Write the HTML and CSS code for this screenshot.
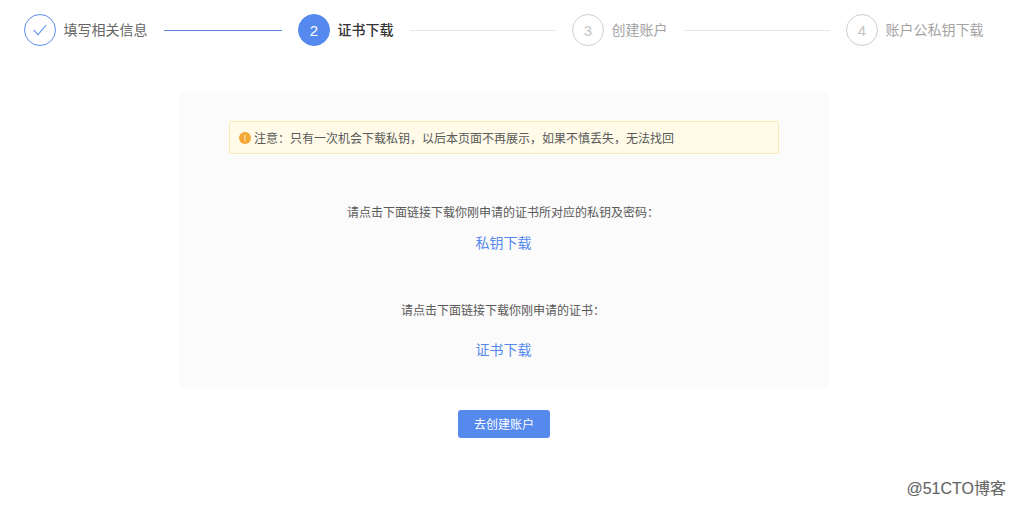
FILE: index.html
```html
<!DOCTYPE html>
<html lang="zh-CN">
<head>
  <meta charset="UTF-8" />
  <title>证书下载</title>
  <link rel="stylesheet" href="styles.css">
</head>
<body>
  <div class="steps">
    <div class="step step-done">
      <span class="step-icon">
        <svg width="14" height="12" viewBox="0 0 14 12" fill="none" stroke="#5b8def" stroke-width="1.1"><path d="M0.8 6.2 L5 10.6 L13.2 1"/></svg>
      </span>
      <span class="step-title">填写相关信息</span>
      <span class="step-line"></span>
    </div>
    <div class="step step-active">
      <span class="step-icon">2</span>
      <span class="step-title">证书下载</span>
      <span class="step-line"></span>
    </div>
    <div class="step">
      <span class="step-icon">3</span>
      <span class="step-title">创建账户</span>
      <span class="step-line"></span>
    </div>
    <div class="step step-last">
      <span class="step-icon">4</span>
      <span class="step-title">账户公私钥下载</span>
    </div>
  </div>

  <div class="card">
    <div class="alert">
      <span class="alert-icon">!</span>
      <span>注意：只有一次机会下载私钥，以后本页面不再展示，如果不慎丢失，无法找回</span>
    </div>
    <p class="hint hint-key">请点击下面链接下载你刚申请的证书所对应的私钥及密码：</p>
    <a class="link link-key" href="#">私钥下载</a>
    <p class="hint hint-cert">请点击下面链接下载你刚申请的证书：</p>
    <a class="link link-cert" href="#">证书下载</a>
  </div>

  <div class="actions">
    <button class="btn" type="button">去创建账户</button>
  </div>

  <div class="watermark">@51CTO博客</div>
</body>
</html>
```

FILE: styles.css
```css
html, body {
  height: 505px;
  overflow: hidden;
}

body {
  margin: 0;
  position: relative;
  background: #fff;
  color: #595959;
  font-family: "Liberation Sans", "Noto Sans CJK SC", sans-serif;
  font-size: 12px;
}

.steps {
  display: flex;
  padding: 14px 0 0 24px;
  height: 32px;
}

.step {
  display: flex;
  align-items: center;
  width: 274px;
  flex: none;
}

.step-last {
  width: auto;
}

.step-icon {
  box-sizing: border-box;
  width: 32px;
  height: 32px;
  flex: none;
  display: flex;
  align-items: center;
  justify-content: center;
  border: 1px solid #d0d0d0;
  border-radius: 50%;
  color: #c4c4c4;
  font-size: 15px;
}

.step-title {
  margin: 0 0 2px 7.5px;
  font-size: 14px;
  color: #a3a3a3;
  white-space: nowrap;
}

.step-line {
  flex: 1;
  height: 1px;
  margin: 0 16px 0 16.5px;
  background: #e8e8e8;
}

.step-done .step-icon {
  border-color: #5b8def;
}

.step-done .step-title {
  color: #666;
}

.step-done .step-line {
  background: #5b87dc;
}

.step-active .step-icon {
  border-color: #5589ee;
  background: #5589ee;
  color: #fff;
}

.step-active .step-title {
  color: #333;
  font-weight: 500;
}

.card {
  box-sizing: border-box;
  width: 650px;
  height: 298px;
  margin: 45px 0 0 179px;
  padding: 30px 50px 0;
  background: #fbfbfb;
  border-radius: 8px;
  text-align: center;
}

.alert {
  box-sizing: border-box;
  height: 33px;
  display: flex;
  align-items: center;
  padding: 0 9px;
  background: #fffbe8;
  border: 1px solid #fbe8b0;
  border-radius: 2px;
  color: #595959;
  text-align: left;
}

.alert-icon {
  width: 12px;
  height: 12px;
  margin-right: 3px;
  flex: none;
  border-radius: 50%;
  background: #f5a833;
  color: #fff;
  font-size: 9px;
  line-height: 12px;
  text-align: center;
}

.hint {
  margin: 0 2px 0 0;
  line-height: 18px;
  color: #595959;
}

.hint-key {
  margin-top: 50px;
}

.hint-cert {
  margin-top: 49px;
}

.link {
  display: block;
  margin-right: 1px;
  font-size: 14px;
  line-height: 20px;
  color: #5589ee;
  text-decoration: none;
}

.link-key {
  margin-top: 11px;
}

.link-cert {
  margin-top: 20px;
}

.actions {
  margin-top: 21px;
  text-align: center;
  width: 1008px;
}

.btn {
  width: 92px;
  height: 28px;
  padding: 0 0 2px;
  border: none;
  border-radius: 3px;
  background: #5589ee;
  color: #fff;
  font-family: inherit;
  font-size: 12px;
}

.watermark {
  position: absolute;
  right: 9px;
  bottom: 6px;
  color: #666;
  font-size: 16px;
  line-height: 20px;
  text-shadow: 0 0 1px #ddd;
}
```
